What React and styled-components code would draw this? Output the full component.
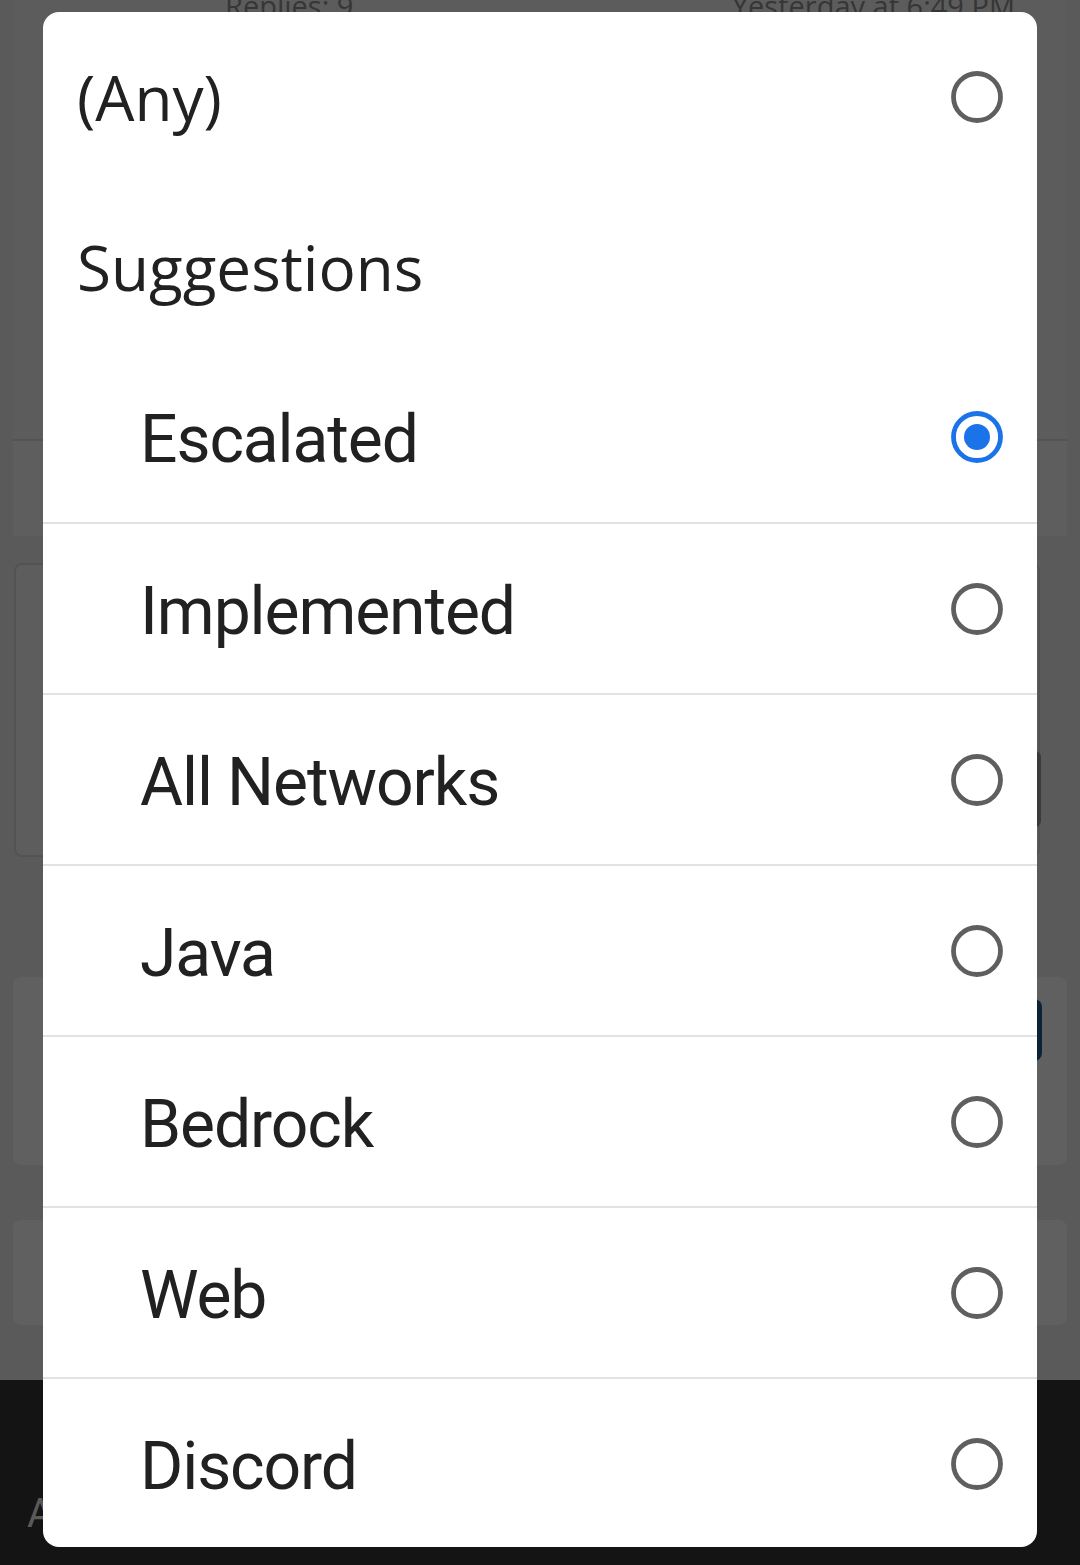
import React, { useState } from "react";
import styled, { createGlobalStyle } from "styled-components";

const GlobalStyle = createGlobalStyle`
  html, body {
    margin: 0;
    padding: 0;
    background: #5a5a5a;
  }
  * {
    box-sizing: border-box;
  }
`;

const options = [
  { id: "any", label: "(Any)", kind: "top" },
  { id: "suggestions", label: "Suggestions", kind: "group" },
  { id: "escalated", label: "Escalated", kind: "item" },
  { id: "implemented", label: "Implemented", kind: "item" },
  { id: "networks", label: "All Networks", kind: "item" },
  { id: "java", label: "Java", kind: "item" },
  { id: "bedrock", label: "Bedrock", kind: "item" },
  { id: "web", label: "Web", kind: "item" },
  { id: "discord", label: "Discord", kind: "item" },
];

export default function App() {
  const [selected, setSelected] = useState("escalated");

  return (
    <Page>
      <GlobalStyle />
      <Behind>
        <TopCard>
          <MetaRow>
            <Meta>Replies: 9</Meta>
            <Meta>Yesterday at 6:49 PM</Meta>
          </MetaRow>
        </TopCard>
        <Strip />
        <FormCard>
          <SideButton />
        </FormCard>
        <Gap h={120} />
        <ActionCard>
          <BlueButton />
          <Equals>=</Equals>
        </ActionCard>
        <Gap h={55} />
        <SmallCard />
        <Gap h={55} />
        <BottomBar>
          <BarLetter>A</BarLetter>
        </BottomBar>
      </Behind>

      <Dialog>
        {options.map((opt, i) => {
          const prev = options[i - 1];
          const divided = prev && prev.kind === "item" && opt.kind === "item";
          return (
            <Row key={opt.id} divided={divided} onClick={() => opt.kind !== "group" && setSelected(opt.id)}>
              <Label kind={opt.kind}>{opt.label}</Label>
              {opt.kind !== "group" && <Radio checked={selected === opt.id} />}
            </Row>
          );
        })}
      </Dialog>
    </Page>
  );
}

function Radio({ checked }) {
  const color = checked ? "#1a73e8" : "#5f5f5f";
  return (
    <svg width="56" height="56" viewBox="0 0 56 56">
      <circle cx="28" cy="28" r="23.5" fill="none" stroke={color} strokeWidth="4.8" />
      {checked && <circle cx="28" cy="28" r="13" fill={color} />}
    </svg>
  );
}

const Page = styled.div`
  position: relative;
  width: 1080px;
  height: 1565px;
  overflow: hidden;
  background: #5a5a5a;
  font-family: Roboto, "Liberation Sans", sans-serif;
`;

const Behind = styled.div`
  display: flex;
  flex-direction: column;
  height: 100%;
`;

const TopCard = styled.div`
  height: 441px;
  margin: 0 13px;
  background: #5c5c5c;
  border-bottom: 2px solid #535353;
`;

const MetaRow = styled.div`
  display: flex;
  justify-content: space-between;
  padding: 0 52px 0 212px;
  margin-top: -14px;
`;

const Meta = styled.span`
  font-family: "Open Sans", sans-serif;
  font-size: 29px;
  color: #363636;
`;

const Strip = styled.div`
  height: 95px;
  margin: 0 13px;
  background: #5e5e5e;
`;

const FormCard = styled.div`
  position: relative;
  height: 294px;
  margin: 27px 40px 0 14px;
  border: 2px solid #535353;
  border-radius: 8px;
  background: #5d5d5d;
`;

const SideButton = styled.div`
  position: absolute;
  right: -3px;
  top: 186px;
  width: 12px;
  height: 76px;
  border-radius: 0 6px 6px 0;
  background: #3a3a3a;
`;

const Gap = styled.div`
  height: ${(p) => p.h}px;
  flex-shrink: 0;
`;

const ActionCard = styled.div`
  position: relative;
  height: 188px;
  margin: 0 13px;
  border-radius: 8px;
  background: #606060;
`;

const BlueButton = styled.div`
  position: absolute;
  right: 25px;
  top: 22px;
  width: 30px;
  height: 62px;
  border-radius: 0 8px 8px 0;
  background: #0d2235;
`;

const Equals = styled.span`
  position: absolute;
  right: 30px;
  top: 112px;
  font-size: 30px;
  color: #3a3a3a;
`;

const SmallCard = styled.div`
  height: 105px;
  margin: 0 13px;
  border-radius: 8px;
  background: #606060;
`;

const BottomBar = styled.div`
  flex: 1;
  background: #141414;
  padding: 110px 0 0 27px;
`;

const BarLetter = styled.span`
  font-size: 40px;
  color: #5a5a5a;
`;

const Dialog = styled.div`
  position: absolute;
  top: 12px;
  left: 43px;
  width: 994px;
  height: 1535px;
  background: #ffffff;
  border-radius: 16px;
  overflow: hidden;
  display: flex;
  flex-direction: column;
`;

const Row = styled.div`
  display: flex;
  align-items: center;
  justify-content: space-between;
  height: ${(p) => (p.divided ? 171 : 170)}px;
  flex-shrink: 0;
  padding: 0 32px 0 0;
  border-top: ${(p) => (p.divided ? "2px solid #e2e2e2" : "none")};
  cursor: pointer;
`;

const Label = styled.span`
  color: #212121;
  padding-left: ${(p) => (p.kind === "item" ? 97 : 34)}px;
  padding-top: ${(p) => (p.kind === "item" ? 5 : 0)}px;
  font-family: ${(p) =>
    p.kind === "item" ? 'Roboto, "Liberation Sans", sans-serif' : '"Open Sans", "Noto Sans", sans-serif'};
  font-size: ${(p) => (p.kind === "item" ? 66 : 62)}px;
  letter-spacing: ${(p) => (p.kind === "item" ? "-1.1px" : "0")};
`;
